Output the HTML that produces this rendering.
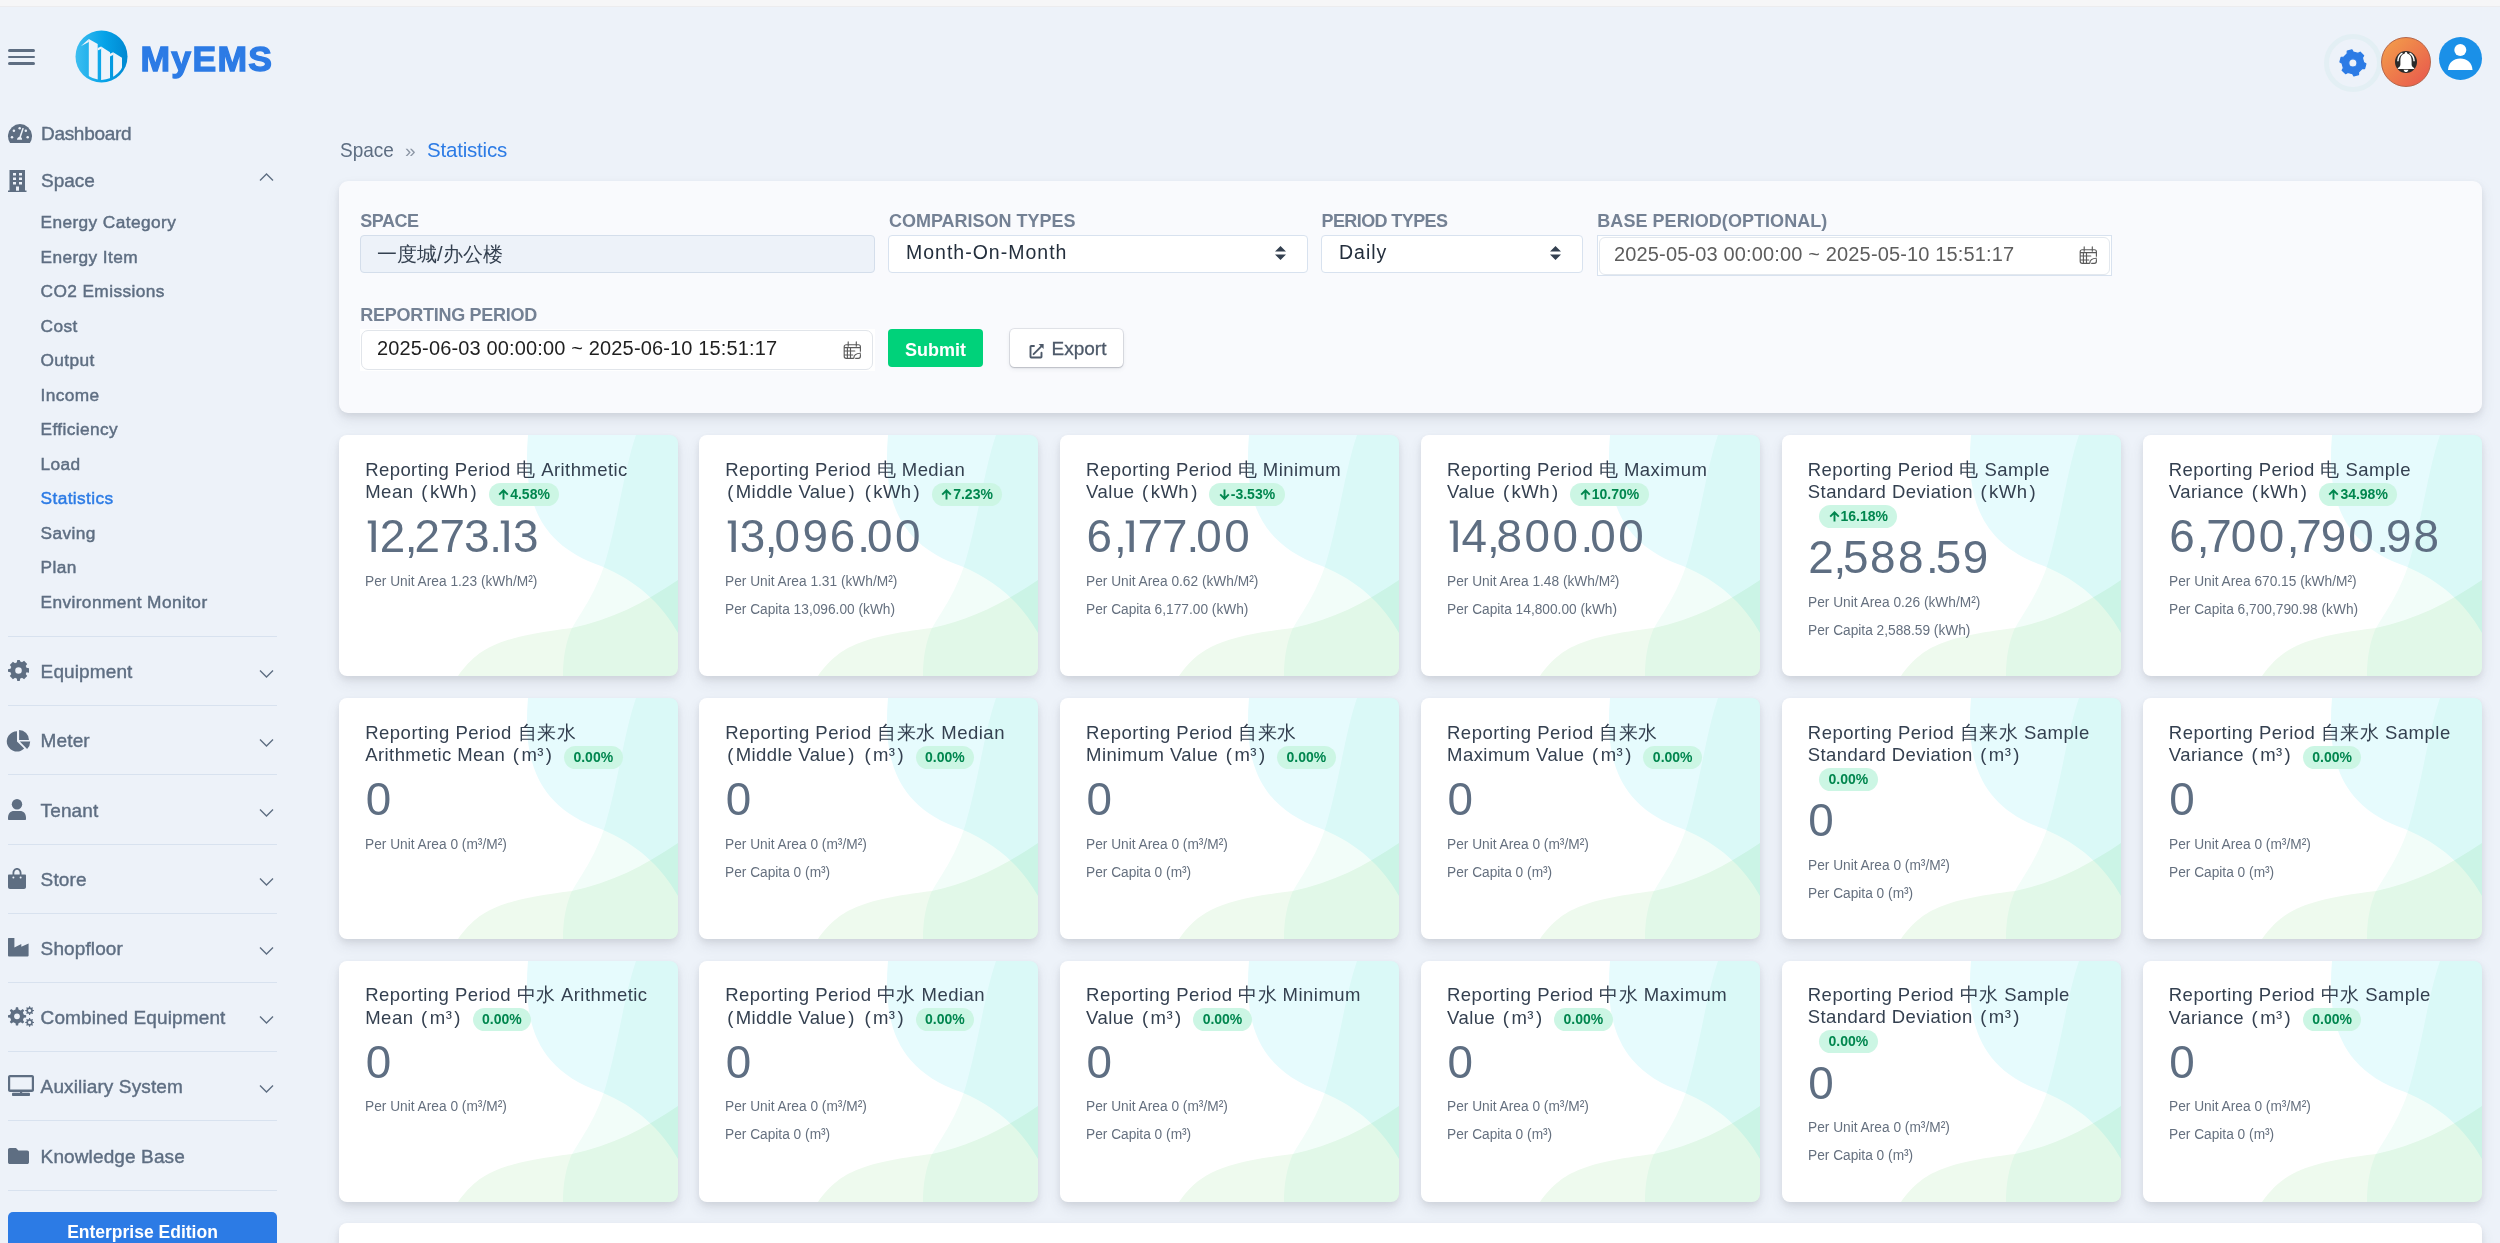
<!DOCTYPE html><html><head><meta charset='utf-8'><title>MyEMS</title><style>
*{box-sizing:border-box}
html,body{margin:0;padding:0}
body{width:2500px;height:1243px;overflow:hidden;background:#edf2f9;font-family:"Liberation Sans",sans-serif;position:relative}
.a{position:absolute;white-space:nowrap}
.topband{position:absolute;left:0;top:0;width:2500px;height:7px;background:#f6f6f7;border-bottom:1px solid #ececee}
.dv{position:absolute;left:8px;width:269px;height:1px;background:#d8e2ef}
.formcard{position:absolute;left:339px;top:181px;width:2143px;height:232px;background:#f9fafd;border-radius:9px;box-shadow:0 7px 14px 0 rgba(65,69,88,.1),0 3px 6px 0 rgba(0,0,0,.07)}
.inp{position:absolute;border:1px solid #d8e2ef;border-radius:5px;background:#fff}
.card{position:absolute;width:339px;height:241px;background:#fff;border-radius:8px;overflow:hidden;box-shadow:0 7px 14px 0 rgba(65,69,88,.1),0 3px 6px 0 rgba(0,0,0,.07)}
.card svg.bg{position:absolute;left:0;top:0}
.badge{position:absolute;height:23px;border-radius:12px;background:#ccf6e4;color:#00864e;font-weight:bold;font-size:15px;line-height:23px;text-align:center;white-space:nowrap}
.one{display:inline-block;vertical-align:0}
.pr{padding:0 2px}
.bdg{display:inline-block;margin:-12px 0 -12px 9.5px;padding:0 9.5px;height:23px;line-height:23px;border-radius:12px;background:#ccf6e4;color:#00864e;font-weight:bold;font-size:14px;letter-spacing:0;vertical-align:-0.5px}
</style></head><body>
<div class="topband"></div>
<div class="a" style="left:8px;top:49.2px;width:27px;height:2.6px;border-radius:2px;background:#5e6e82"></div>
<div class="a" style="left:8px;top:55.7px;width:27px;height:2.6px;border-radius:2px;background:#5e6e82"></div>
<div class="a" style="left:8px;top:62.2px;width:27px;height:2.6px;border-radius:2px;background:#5e6e82"></div>
<svg class="a" style="left:70px;top:25px" width="65" height="65" viewBox="0 0 65 65">
<defs><linearGradient id="lg" x1="0" y1="0" x2="1" y2="0"><stop offset="0" stop-color="#3dbef0"/><stop offset="0.55" stop-color="#06a3e8"/><stop offset="1" stop-color="#0088d1"/></linearGradient>
<clipPath id="lc"><circle cx="31.5" cy="31.5" r="23.4"/></clipPath></defs>
<circle cx="31.5" cy="31.5" r="26" fill="url(#lg)"/>
<g clip-path="url(#lc)" fill="#eef3fa">
<path d="M18.8,14 L27.7,19 L27.7,60 L18.8,60 Z"/><path d="M11,21 L18.8,13.9 L18.8,17 L12.6,20.3 Z"/>
<path d="M31.1,21.4 L40,27.2 L40,60 L31.1,60 Z"/><path d="M27.7,23 L31.1,21.4 L31.1,24 L27.7,25.6 Z"/>
<path d="M43.1,27.2 L52,32.7 L52,60 L43.1,60 Z"/><path d="M40,28.8 L43.1,27.2 L43.1,30 L40,31.4 Z"/>
</g></svg>
<div class="a" style="left:140.5px;top:41.7px;font-size:35.5px;line-height:35.5px;color:#2c7be5;font-weight:bold;letter-spacing:1.3px;-webkit-text-stroke:1.3px #2c7be5;">MyEMS</div>
<svg class="a" style="left:4px;top:119px" width="30" height="30" viewBox="0 0 30 30"><path fill="#5e6e82" d="M6.1,23.9 A12,12 0 1 1 25.9,23.9 Z"/><g fill="#edf2f9"><circle cx="9.9" cy="11.8" r="1.25"/><circle cx="15.7" cy="9.2" r="1.25"/><circle cx="21.8" cy="11.8" r="1.25"/><circle cx="8" cy="18.3" r="1.25"/><circle cx="23.7" cy="18.3" r="1.25"/><path d="M18.4,8.9 L19.9,9.2 L16.9,18.3 C17.6,18.6 18.1,19.3 18.1,20.8 L13,20.8 C13,19.4 13.9,18.3 15.3,18.1 Z"/></g></svg><svg class="a" style="left:8px;top:170px" width="19" height="22" viewBox="0 0 19 22"><path fill="#5e6e82" d="M1.5,0 L17,0 L17,20.5 L18.5,20.5 L18.5,22 L0,22 L0,20.5 L1.5,20.5 Z"/><g fill="#edf2f9"><rect x="5" y="3" width="3" height="2.5"/><rect x="11" y="3" width="3" height="2.5"/><rect x="5" y="7.5" width="3" height="2.5"/><rect x="11" y="7.5" width="3" height="2.5"/><rect x="5" y="12" width="3" height="2.5"/><rect x="11" y="12" width="3" height="2.5"/><rect x="8" y="16.5" width="3" height="4.2"/></g></svg><div class="a" style="left:41.0px;top:123.9px;font-size:19px;line-height:19px;color:#5e6e82;font-weight:normal;letter-spacing:-0.306px;-webkit-text-stroke:0.4px #5e6e82;">Dashboard</div>
<div class="a" style="left:41.0px;top:170.5px;font-size:19px;line-height:19px;color:#5e6e82;font-weight:normal;-webkit-text-stroke:0.4px #5e6e82;">Space</div>
<svg class="a" style="left:259px;top:172px" width="15" height="10" viewBox="0 0 15 10"><path d="M1,8.5 L7.5,2 L14,8.5" fill="none" stroke="#5e6e82" stroke-width="1.4"/></svg>
<div class="a" style="left:40.5px;top:214.4px;font-size:17.3px;line-height:17.3px;color:#5e6e82;font-weight:normal;letter-spacing:0.4px;-webkit-text-stroke:0.45px #5e6e82;">Energy Category</div>
<div class="a" style="left:40.5px;top:248.9px;font-size:17.3px;line-height:17.3px;color:#5e6e82;font-weight:normal;letter-spacing:0.4px;-webkit-text-stroke:0.45px #5e6e82;">Energy Item</div>
<div class="a" style="left:40.5px;top:283.4px;font-size:17.3px;line-height:17.3px;color:#5e6e82;font-weight:normal;letter-spacing:0.4px;-webkit-text-stroke:0.45px #5e6e82;">CO2 Emissions</div>
<div class="a" style="left:40.5px;top:317.9px;font-size:17.3px;line-height:17.3px;color:#5e6e82;font-weight:normal;letter-spacing:0.4px;-webkit-text-stroke:0.45px #5e6e82;">Cost</div>
<div class="a" style="left:40.5px;top:352.4px;font-size:17.3px;line-height:17.3px;color:#5e6e82;font-weight:normal;letter-spacing:0.4px;-webkit-text-stroke:0.45px #5e6e82;">Output</div>
<div class="a" style="left:40.5px;top:386.9px;font-size:17.3px;line-height:17.3px;color:#5e6e82;font-weight:normal;letter-spacing:0.4px;-webkit-text-stroke:0.45px #5e6e82;">Income</div>
<div class="a" style="left:40.5px;top:421.4px;font-size:17.3px;line-height:17.3px;color:#5e6e82;font-weight:normal;letter-spacing:0.4px;-webkit-text-stroke:0.45px #5e6e82;">Efficiency</div>
<div class="a" style="left:40.5px;top:455.9px;font-size:17.3px;line-height:17.3px;color:#5e6e82;font-weight:normal;letter-spacing:0.4px;-webkit-text-stroke:0.45px #5e6e82;">Load</div>
<div class="a" style="left:40.5px;top:490.4px;font-size:17.3px;line-height:17.3px;color:#2c7be5;font-weight:normal;letter-spacing:0.4px;-webkit-text-stroke:0.45px #2c7be5;">Statistics</div>
<div class="a" style="left:40.5px;top:524.9px;font-size:17.3px;line-height:17.3px;color:#5e6e82;font-weight:normal;letter-spacing:0.4px;-webkit-text-stroke:0.45px #5e6e82;">Saving</div>
<div class="a" style="left:40.5px;top:559.4px;font-size:17.3px;line-height:17.3px;color:#5e6e82;font-weight:normal;letter-spacing:0.4px;-webkit-text-stroke:0.45px #5e6e82;">Plan</div>
<div class="a" style="left:40.5px;top:593.9px;font-size:17.3px;line-height:17.3px;color:#5e6e82;font-weight:normal;letter-spacing:0.4px;-webkit-text-stroke:0.45px #5e6e82;">Environment Monitor</div>
<div class="dv" style="top:635.8px"></div>
<div class="dv" style="top:704.7px"></div>
<div class="dv" style="top:773.7px"></div>
<div class="dv" style="top:843.9px"></div>
<div class="dv" style="top:913.0px"></div>
<div class="dv" style="top:981.7px"></div>
<div class="dv" style="top:1051.0px"></div>
<div class="dv" style="top:1120.0px"></div>
<div class="dv" style="top:1190.0px"></div>
<div class="a" style="left:40.6px;top:661.8px;font-size:19px;line-height:19px;color:#5e6e82;font-weight:normal;letter-spacing:0.12px;-webkit-text-stroke:0.4px #5e6e82;">Equipment</div>
<svg class="a" style="left:259px;top:668.9px" width="15" height="10" viewBox="0 0 15 10"><path d="M1,1.5 L7.5,8 L14,1.5" fill="none" stroke="#5e6e82" stroke-width="1.4"/></svg>
<div class="a" style="left:40.6px;top:730.6px;font-size:19px;line-height:19px;color:#5e6e82;font-weight:normal;letter-spacing:0.12px;-webkit-text-stroke:0.4px #5e6e82;">Meter</div>
<svg class="a" style="left:259px;top:737.7px" width="15" height="10" viewBox="0 0 15 10"><path d="M1,1.5 L7.5,8 L14,1.5" fill="none" stroke="#5e6e82" stroke-width="1.4"/></svg>
<div class="a" style="left:40.6px;top:801.3px;font-size:19px;line-height:19px;color:#5e6e82;font-weight:normal;letter-spacing:0.12px;-webkit-text-stroke:0.4px #5e6e82;">Tenant</div>
<svg class="a" style="left:259px;top:808.4px" width="15" height="10" viewBox="0 0 15 10"><path d="M1,1.5 L7.5,8 L14,1.5" fill="none" stroke="#5e6e82" stroke-width="1.4"/></svg>
<div class="a" style="left:40.6px;top:870.1px;font-size:19px;line-height:19px;color:#5e6e82;font-weight:normal;letter-spacing:0.12px;-webkit-text-stroke:0.4px #5e6e82;">Store</div>
<svg class="a" style="left:259px;top:877.2px" width="15" height="10" viewBox="0 0 15 10"><path d="M1,1.5 L7.5,8 L14,1.5" fill="none" stroke="#5e6e82" stroke-width="1.4"/></svg>
<div class="a" style="left:40.6px;top:938.9px;font-size:19px;line-height:19px;color:#5e6e82;font-weight:normal;letter-spacing:0.12px;-webkit-text-stroke:0.4px #5e6e82;">Shopfloor</div>
<svg class="a" style="left:259px;top:946.0px" width="15" height="10" viewBox="0 0 15 10"><path d="M1,1.5 L7.5,8 L14,1.5" fill="none" stroke="#5e6e82" stroke-width="1.4"/></svg>
<div class="a" style="left:40.6px;top:1007.9px;font-size:19px;line-height:19px;color:#5e6e82;font-weight:normal;letter-spacing:0.12px;-webkit-text-stroke:0.4px #5e6e82;">Combined Equipment</div>
<svg class="a" style="left:259px;top:1015.0px" width="15" height="10" viewBox="0 0 15 10"><path d="M1,1.5 L7.5,8 L14,1.5" fill="none" stroke="#5e6e82" stroke-width="1.4"/></svg>
<div class="a" style="left:40.6px;top:1076.9px;font-size:19px;line-height:19px;color:#5e6e82;font-weight:normal;letter-spacing:0.12px;-webkit-text-stroke:0.4px #5e6e82;">Auxiliary System</div>
<svg class="a" style="left:259px;top:1084.0px" width="15" height="10" viewBox="0 0 15 10"><path d="M1,1.5 L7.5,8 L14,1.5" fill="none" stroke="#5e6e82" stroke-width="1.4"/></svg>
<div class="a" style="left:40.6px;top:1146.9px;font-size:19px;line-height:19px;color:#5e6e82;font-weight:normal;letter-spacing:0.12px;-webkit-text-stroke:0.4px #5e6e82;">Knowledge Base</div>
<svg class="a" style="left:8px;top:660px" width="21" height="21" viewBox="0 0 512 512"><path fill="#5e6e82" d="M512 310V202l-62-12c-4-15-10-29-18-42l36-52-76-76-52 36c-13-8-27-14-42-18L286 0H226l-12 62c-15 4-29 10-42 18L120 44 44 120l36 52c-8 13-14 27-18 42L0 226v60l62 12c4 15 10 29 18 42l-36 52 76 76 52-36c13 8 27 14 42 18l12 62h60l12-62c15-4 29-10 42-18l52 36 76-76-36-52c8-13 14-27 18-42zM256 336a80 80 0 1 1 0-160 80 80 0 0 1 0 160z"/></svg>
<svg class="a" style="left:4px;top:726px" width="30" height="30" viewBox="0 0 30 30"><path fill="#5e6e82" d="M13,15.4 L13,5.2 A10.2,10.2 0 1 0 20.2,22.6 Z M15.1,13.9 L15.1,4 A9.9,9.9 0 0 1 25,13.9 Z M15.8,15.6 L26.2,15.6 A10.4,10.4 0 0 1 23.1,23 Z"/></svg>
<svg class="a" style="left:8px;top:799px" width="18" height="21" viewBox="0 0 18 21"><circle cx="9" cy="5.2" r="5.2" fill="#5e6e82"/><path fill="#5e6e82" d="M0,19 C0,14.5 2.5,12 6,12 L12,12 C15.5,12 18,14.5 18,19 L18,20 C18,20.6 17.6,21 17,21 L1,21 C0.4,21 0,20.6 0,20 Z"/></svg>
<svg class="a" style="left:8px;top:868px" width="18" height="21" viewBox="0 0 18 21"><path fill="#5e6e82" d="M4.5,6.5 L4.5,5 C4.5,2.2 6.5,0 9,0 C11.5,0 13.5,2.2 13.5,5 L13.5,6.5 L17,6.5 C17.6,6.5 18,7 18,7.6 L18,19 C18,20.2 17.2,21 16,21 L2,21 C0.8,21 0,20.2 0,19 L0,7.6 C0,7 0.4,6.5 1,6.5 Z M6.3,6.5 L11.7,6.5 L11.7,5 C11.7,3.3 10.5,1.8 9,1.8 C7.5,1.8 6.3,3.3 6.3,5 Z"/><circle cx="5.4" cy="9.5" r="1" fill="#edf2f9"/><circle cx="12.6" cy="9.5" r="1" fill="#edf2f9"/></svg>
<svg class="a" style="left:8px;top:938px" width="21" height="19" viewBox="0 0 21 19"><path fill="#5e6e82" d="M0.6,0 L6.4,0 L6.4,9.6 L13.3,6 L13.3,8.8 L20.6,5.6 L20.6,17.6 C20.6,18.1 20.2,18.5 19.7,18.5 L0.9,18.5 C0.4,18.5 0,18.1 0,17.6 L0,0.6 C0,0.3 0.3,0 0.6,0 Z"/></svg>
<svg class="a" style="left:8px;top:1006px" width="27" height="22" viewBox="0 0 27 22"><path fill="#5e6e82" fill-rule="evenodd" d="M7.50,3.46 L7.92,1.16 L10.08,1.16 L10.50,3.46 L12.77,4.40 L14.70,3.08 L16.22,4.60 L14.90,6.53 L15.84,8.80 L18.14,9.22 L18.14,11.38 L15.84,11.80 L14.90,14.07 L16.22,16.00 L14.70,17.52 L12.77,16.20 L10.50,17.14 L10.08,19.44 L7.92,19.44 L7.50,17.14 L5.23,16.20 L3.30,17.52 L1.78,16.00 L3.10,14.07 L2.16,11.80 L-0.14,11.38 L-0.14,9.22 L2.16,8.80 L3.10,6.53 L1.78,4.60 L3.30,3.08 L5.23,4.40 Z M11.90,10.30 A2.9,2.9 0 1 0 6.10,10.30 A2.9,2.9 0 1 0 11.90,10.30 Z"/><path fill="#5e6e82" fill-rule="evenodd" d="M24.82,3.89 L25.97,4.08 L25.97,5.12 L24.82,5.31 L24.38,6.38 L25.06,7.32 L24.32,8.06 L23.38,7.38 L22.31,7.82 L22.12,8.97 L21.08,8.97 L20.89,7.82 L19.82,7.38 L18.88,8.06 L18.14,7.32 L18.82,6.38 L18.38,5.31 L17.23,5.12 L17.23,4.08 L18.38,3.89 L18.82,2.82 L18.14,1.88 L18.88,1.14 L19.82,1.82 L20.89,1.38 L21.08,0.23 L22.12,0.23 L22.31,1.38 L23.38,1.82 L24.32,1.14 L25.06,1.88 L24.38,2.82 Z M23.20,4.60 A1.6,1.6 0 1 0 20.00,4.60 A1.6,1.6 0 1 0 23.20,4.60 Z"/><path fill="#5e6e82" fill-rule="evenodd" d="M24.82,15.69 L25.97,15.88 L25.97,16.92 L24.82,17.11 L24.38,18.18 L25.06,19.12 L24.32,19.86 L23.38,19.18 L22.31,19.62 L22.12,20.77 L21.08,20.77 L20.89,19.62 L19.82,19.18 L18.88,19.86 L18.14,19.12 L18.82,18.18 L18.38,17.11 L17.23,16.92 L17.23,15.88 L18.38,15.69 L18.82,14.62 L18.14,13.68 L18.88,12.94 L19.82,13.62 L20.89,13.18 L21.08,12.03 L22.12,12.03 L22.31,13.18 L23.38,13.62 L24.32,12.94 L25.06,13.68 L24.38,14.62 Z M23.20,16.40 A1.6,1.6 0 1 0 20.00,16.40 A1.6,1.6 0 1 0 23.20,16.40 Z"/></svg>
<svg class="a" style="left:8px;top:1075px" width="26" height="21" viewBox="0 0 26 21"><path fill="#5e6e82" fill-rule="evenodd" d="M2,0 L24,0 C25.1,0 26,0.9 26,2 L26,15 C26,16.1 25.1,17 24,17 L2,17 C0.9,17 0,16.1 0,15 L0,2 C0,0.9 0.9,0 2,0 Z M2.2,2.2 L2.2,14.6 L23.8,14.6 L23.8,2.2 Z"/><rect x="12" y="16" width="2.2" height="2.5" fill="#5e6e82"/><rect x="4" y="17.8" width="18" height="3.2" rx="0.8" fill="#5e6e82"/></svg>
<svg class="a" style="left:8px;top:1148px" width="21" height="16" viewBox="0 0 21 16"><path fill="#5e6e82" d="M1.8,0 L8,0 L10.4,2.6 L19.2,2.6 C20.2,2.6 21,3.4 21,4.4 L21,14.2 C21,15.2 20.2,16 19.2,16 L1.8,16 C0.8,16 0,15.2 0,14.2 L0,1.8 C0,0.8 0.8,0 1.8,0 Z"/></svg>
<div class="a" style="left:8px;top:1212px;width:269px;height:40px;border-radius:5px;background:#2c7be5"></div>
<div class="a" style="left:8.0px;top:1224.4px;font-size:17.5px;line-height:17.5px;color:#fff;font-weight:bold;width:269px;text-align:center;">Enterprise Edition</div>
<div class="a" style="left:2324px;top:34px;width:58px;height:58px;border-radius:50%;border:5px solid #e3eff4"></div>
<svg class="a" style="left:2330px;top:40px" width="46" height="46" viewBox="0 0 46 46"><path fill="#2c7be5" fill-rule="evenodd" stroke="#2c7be5" stroke-width="1.2" stroke-linejoin="round" d="M17.21,13.72 L17.24,11.20 L21.95,9.93 L23.24,12.11 L28.00,13.38 L30.21,12.15 L33.65,15.59 L32.42,17.80 L33.69,22.56 L35.87,23.85 L34.60,28.56 L32.08,28.59 L28.59,32.08 L28.56,34.60 L23.85,35.87 L22.56,33.69 L17.80,32.42 L15.59,33.65 L12.15,30.21 L13.38,28.00 L12.11,23.24 L9.93,21.95 L11.20,17.24 L13.72,17.21 Z M27.00,22.90 A4.1,4.1 0 1 0 18.80,22.90 A4.1,4.1 0 1 0 27.00,22.90 Z"/></svg>
<div class="a" style="left:2381px;top:37px;width:50px;height:50px;border-radius:50%;background:linear-gradient(135deg,#f3a14a,#e8554d);border:1px solid #b5654a"></div>
<svg class="a" style="left:2395px;top:51px" width="22" height="22" viewBox="0 0 22 22"><circle cx="11" cy="11" r="11" fill="#2b2b2b"/><path fill="#fff" d="M11,0.9 C11.8,0.9 12.2,1.5 12.2,2.4 C15.5,3.2 16.6,6 16.6,9.5 L16.6,13.6 C16.6,15.3 18,16.4 19.2,17.1 L19.2,18 L2.8,18 L2.8,17.1 C4,16.4 5.4,15.3 5.4,13.6 L5.4,9.5 C5.4,6 6.5,3.2 9.8,2.4 C9.8,1.5 10.2,0.9 11,0.9 Z M8.6,18.7 L13.4,18.7 C13,20.2 12.1,21 11,21 C9.9,21 9,20.2 8.6,18.7 Z"/><path d="M2.9,10.2 C2.9,6.6 4.6,3.7 7.4,2.1 M19.1,10.2 C19.1,6.6 17.4,3.7 14.6,2.1" stroke="#fff" stroke-width="1.5" fill="none"/></svg>
<div class="a" style="left:2439px;top:37px;width:43px;height:43px;border-radius:50%;background:#1a90e8"></div>
<svg class="a" style="left:2439px;top:37px" width="43" height="43" viewBox="0 0 43 43"><circle cx="21.3" cy="13" r="6" fill="#fff"/><path fill="#fff" d="M9,33 C9.5,25.5 14.5,21.5 21.3,21.5 C28,21.5 33,25.5 33.5,33 Z"/></svg>
<div class="a" style="left:339.5px;top:139.4px;font-size:21px;line-height:21px;color:#5e6e82;font-weight:normal;transform:scaleX(0.905);transform-origin:0 0;">Space</div>
<div class="a" style="left:405.0px;top:141.1px;font-size:19px;line-height:19px;color:#8d97a5;font-weight:normal;">»</div>
<div class="a" style="left:427.0px;top:139.8px;font-size:20.5px;line-height:20.5px;color:#2c7be5;font-weight:normal;letter-spacing:-0.202px;">Statistics</div>
<div class="formcard"></div>
<div class="a" style="left:360.3px;top:212.2px;font-size:18px;line-height:18px;color:#748194;font-weight:bold;letter-spacing:-0.504px;">SPACE</div>
<div class="a" style="left:888.9px;top:212.2px;font-size:18px;line-height:18px;color:#748194;font-weight:bold;letter-spacing:-0.002px;">COMPARISON TYPES</div>
<div class="a" style="left:1321.5px;top:212.2px;font-size:18px;line-height:18px;color:#748194;font-weight:bold;letter-spacing:-0.594px;">PERIOD TYPES</div>
<div class="a" style="left:1597.3px;top:212.2px;font-size:18px;line-height:18px;color:#748194;font-weight:bold;letter-spacing:0.05px;">BASE PERIOD(OPTIONAL)</div>
<div class="a" style="left:360.3px;top:306.3px;font-size:18px;line-height:18px;color:#748194;font-weight:bold;letter-spacing:-0.268px;">REPORTING PERIOD</div>
<div class="inp" style="left:360px;top:235px;width:515px;height:38px;background:#edf2f9;border-color:#d4deeb;border-radius:4px"></div>
<div class="a" style="left:377.0px;top:244.1px;font-size:20px;line-height:20px;color:#344050;font-weight:normal;">一度城/办公楼</div>
<div class="inp" style="left:888px;top:235px;width:420px;height:38px;border-radius:4px"></div>
<div class="a" style="left:906.0px;top:243.2px;font-size:19.5px;line-height:19.5px;color:#232e3c;font-weight:normal;letter-spacing:1.0px;">Month-On-Month</div>
<svg class="a" style="left:1275px;top:246px" width="11" height="14" viewBox="0 0 11 14"><path fill="#344050" d="M5.5,0 L11,5.5 L0,5.5 Z M0,8.5 L11,8.5 L5.5,14 Z"/></svg>
<div class="inp" style="left:1321px;top:235px;width:262px;height:38px;border-radius:4px"></div>
<div class="a" style="left:1339.0px;top:243.2px;font-size:19.5px;line-height:19.5px;color:#232e3c;font-weight:normal;letter-spacing:1.0px;">Daily</div>
<svg class="a" style="left:1550px;top:246px" width="11" height="14" viewBox="0 0 11 14"><path fill="#344050" d="M5.5,0 L11,5.5 L0,5.5 Z M0,8.5 L11,8.5 L5.5,14 Z"/></svg>
<div class="a" style="left:1597px;top:235px;width:515px;height:41px;border:1px solid #d8e2ef;background:#fff"></div>
<div class="inp" style="left:1599px;top:236.5px;width:511px;height:38.5px;border-radius:6px;border-color:#e3e8ee"></div>
<div class="a" style="left:1614.0px;top:244.1px;font-size:20px;line-height:20px;color:#5d5d5d;font-weight:normal;letter-spacing:0.15px;">2025-05-03 00:00:00 ~ 2025-05-10 15:51:17</div>
<svg class="a" style="left:2079px;top:246px" width="18" height="18" viewBox="0 0 18 18"><path d="M17.4,10.2 L17.4,5.7 C17.4,4.6 16.5,3.7 15.4,3.7 L3.2,3.7 C2.1,3.7 1.2,4.6 1.2,5.7 L1.2,15.3 C1.2,16.4 2.1,17.3 3.2,17.3 L10.3,17.3 M17.4,13.6 L17.4,15.3 C17.4,16.4 16.5,17.3 15.4,17.3 L12.6,17.3 M1.2,6.6 L17.4,6.6 M5.2,0.9 L5.2,5.2 M13.3,0.9 L13.3,5.2 M1.2,10 L11.8,10 M1.2,14 L9.8,14 M4.4,7 L4.4,17 M7.5,7 L7.5,17 M10.8,17.2 C10.8,14.6 11.8,12.4 17.4,12.2" fill="none" stroke="#5a5a5a" stroke-width="1.15" stroke-linecap="round"/></svg>
<div class="a" style="left:360px;top:329px;width:515px;height:42px;background:#fff"></div>
<div class="inp" style="left:361px;top:330px;width:512px;height:39.5px;border-radius:7px;border-color:#e1e5ea"></div>
<div class="a" style="left:377.0px;top:338.4px;font-size:20px;line-height:20px;color:#1f1f1f;font-weight:normal;letter-spacing:0.15px;">2025-06-03 00:00:00 ~ 2025-06-10 15:51:17</div>
<svg class="a" style="left:843px;top:341px" width="18" height="18" viewBox="0 0 18 18"><path d="M17.4,10.2 L17.4,5.7 C17.4,4.6 16.5,3.7 15.4,3.7 L3.2,3.7 C2.1,3.7 1.2,4.6 1.2,5.7 L1.2,15.3 C1.2,16.4 2.1,17.3 3.2,17.3 L10.3,17.3 M17.4,13.6 L17.4,15.3 C17.4,16.4 16.5,17.3 15.4,17.3 L12.6,17.3 M1.2,6.6 L17.4,6.6 M5.2,0.9 L5.2,5.2 M13.3,0.9 L13.3,5.2 M1.2,10 L11.8,10 M1.2,14 L9.8,14 M4.4,7 L4.4,17 M7.5,7 L7.5,17 M10.8,17.2 C10.8,14.6 11.8,12.4 17.4,12.2" fill="none" stroke="#5a5a5a" stroke-width="1.15" stroke-linecap="round"/></svg>
<div class="a" style="left:888px;top:329px;width:95px;height:37.5px;border-radius:4px;background:#00d27a"></div>
<div class="a" style="left:888.0px;top:340.5px;font-size:18px;line-height:18px;color:#fff;font-weight:bold;width:95px;text-align:center;">Submit</div>
<div class="a" style="left:1009.5px;top:328.5px;width:113.5px;height:38.5px;border-radius:4.5px;background:#fff;box-shadow:0 0 0 1px rgba(43,45,80,.1),0 2px 5px 0 rgba(43,45,80,.08),0 1px 1.5px 0 rgba(0,0,0,.07),0 1px 2px 0 rgba(0,0,0,.08)"></div>
<svg class="a" style="left:1028.5px;top:342.5px" width="16" height="16" viewBox="0 0 16 16"><path d="M5,3 L2.2,3 C1.8,3 1.5,3.3 1.5,3.7 L1.5,13.8 C1.5,14.2 1.8,14.5 2.2,14.5 L11.8,14.5 C12.2,14.5 12.5,14.2 12.5,13.8 L12.5,9.8 M4.6,11.2 L12.6,3.2" fill="none" stroke="#4d5969" stroke-width="1.9" stroke-linecap="round"/><path d="M9.6,1 L14.6,1 L14.6,6 Z" fill="#4d5969"/></svg>
<div class="a" style="left:1051.5px;top:339.0px;font-size:19px;line-height:19px;color:#4d5969;font-weight:normal;-webkit-text-stroke:0.3px #4d5969;">Export</div>
<div class="card" style="left:339.2px;top:435px"><svg class="bg" width="339" height="241" viewBox="0 0 339 241">
<path style="mix-blend-mode:multiply" fill="#e6fbfd" d="M189,0 C184,58 195,108 262,131 C298,146 322,168 339,198 L339,0 Z"/>
<path style="mix-blend-mode:multiply" fill="#f2fdf9" d="M297,0 C285,35 280,80 266,128 C256,160 240,180 232,195 C226,210 224,225 224,241 L339,241 L339,0 Z"/>
<path style="mix-blend-mode:multiply" fill="#eefaee" d="M119,241 C140,212 160,202 233,193 C272,185 305,168 339,145 L339,241 Z"/>
</svg></div>
<div class="a" style="left:365.2px;top:460.6px;font-size:18.5px;line-height:18.5px;color:#344050;font-weight:normal;letter-spacing:0.418px;">Reporting Period 电 Arithmetic</div>
<div class="a" style="left:365.2px;top:483.3px;font-size:18.5px;line-height:18.5px;color:#344050;font-weight:normal;letter-spacing:0.525px;">Mean <span class="pr">(</span>kWh<span class="pr">)</span><span class="bdg"><svg width="11" height="11" viewBox="0 0 11 11" style="vertical-align:-1px;margin-right:1px"><path d="M5.5,10.5 L5.5,1.5 M1.2,5.6 L5.5,1.3 L9.8,5.6" fill="none" stroke="#00864e" stroke-width="1.9"/></svg>4.58%</span></div>
<div class="a" style="left:365.7px;top:514.4px;font-size:45.8px;line-height:45.8px;color:#5e6e82;font-weight:normal;"><svg class="one" width="14" height="32" viewBox="0 0 14 32"><path fill="#5e6e82" d="M1.8,0.4 L9.8,0.4 L9.8,32 L5.5,32 L5.5,3.6 L1.8,3.6 Z"/></svg><span style="letter-spacing:-0.3px">2</span><span style="letter-spacing:-3.2px">,</span><span style="letter-spacing:-0.3px">2</span><span style="letter-spacing:-1.0px">7</span><span style="letter-spacing:-0.3px">3</span><span style="letter-spacing:-3.0px">.</span><svg class="one" width="14" height="32" viewBox="0 0 14 32"><path fill="#5e6e82" d="M1.8,0.4 L9.8,0.4 L9.8,32 L5.5,32 L5.5,3.6 L1.8,3.6 Z"/></svg><span style="letter-spacing:-0.3px">3</span></div>
<div class="a" style="left:365.2px;top:572.9px;font-size:15.5px;line-height:15.5px;color:#65707f;font-weight:normal;transform:scaleX(0.885);transform-origin:0 0;">Per Unit Area 1.23 (kWh/M²)</div>
<div class="card" style="left:699.2px;top:435px"><svg class="bg" width="339" height="241" viewBox="0 0 339 241">
<path style="mix-blend-mode:multiply" fill="#e6fbfd" d="M189,0 C184,58 195,108 262,131 C298,146 322,168 339,198 L339,0 Z"/>
<path style="mix-blend-mode:multiply" fill="#f2fdf9" d="M297,0 C285,35 280,80 266,128 C256,160 240,180 232,195 C226,210 224,225 224,241 L339,241 L339,0 Z"/>
<path style="mix-blend-mode:multiply" fill="#eefaee" d="M119,241 C140,212 160,202 233,193 C272,185 305,168 339,145 L339,241 Z"/>
</svg></div>
<div class="a" style="left:725.2px;top:460.6px;font-size:18.5px;line-height:18.5px;color:#344050;font-weight:normal;letter-spacing:0.446px;">Reporting Period 电 Median</div>
<div class="a" style="left:725.2px;top:483.3px;font-size:18.5px;line-height:18.5px;color:#344050;font-weight:normal;letter-spacing:0.429px;"><span class="pr">(</span>Middle Value<span class="pr">)</span> <span class="pr">(</span>kWh<span class="pr">)</span><span class="bdg"><svg width="11" height="11" viewBox="0 0 11 11" style="vertical-align:-1px;margin-right:1px"><path d="M5.5,10.5 L5.5,1.5 M1.2,5.6 L5.5,1.3 L9.8,5.6" fill="none" stroke="#00864e" stroke-width="1.9"/></svg>7.23%</span></div>
<div class="a" style="left:725.7px;top:514.4px;font-size:45.8px;line-height:45.8px;color:#5e6e82;font-weight:normal;"><svg class="one" width="14" height="32" viewBox="0 0 14 32"><path fill="#5e6e82" d="M1.8,0.4 L9.8,0.4 L9.8,32 L5.5,32 L5.5,3.6 L1.8,3.6 Z"/></svg><span style="letter-spacing:-0.3px">3</span><span style="letter-spacing:-3.2px">,</span><span style="letter-spacing:2.5px">0</span><span style="letter-spacing:2.0px">9</span><span style="letter-spacing:2.0px">6</span><span style="letter-spacing:-3.0px">.</span><span style="letter-spacing:2.5px">0</span><span style="letter-spacing:2.5px">0</span></div>
<div class="a" style="left:725.2px;top:572.9px;font-size:15.5px;line-height:15.5px;color:#65707f;font-weight:normal;transform:scaleX(0.885);transform-origin:0 0;">Per Unit Area 1.31 (kWh/M²)</div>
<div class="a" style="left:725.2px;top:600.7px;font-size:15.5px;line-height:15.5px;color:#65707f;font-weight:normal;transform:scaleX(0.885);transform-origin:0 0;">Per Capita 13,096.00 (kWh)</div>
<div class="card" style="left:1060.1px;top:435px"><svg class="bg" width="339" height="241" viewBox="0 0 339 241">
<path style="mix-blend-mode:multiply" fill="#e6fbfd" d="M189,0 C184,58 195,108 262,131 C298,146 322,168 339,198 L339,0 Z"/>
<path style="mix-blend-mode:multiply" fill="#f2fdf9" d="M297,0 C285,35 280,80 266,128 C256,160 240,180 232,195 C226,210 224,225 224,241 L339,241 L339,0 Z"/>
<path style="mix-blend-mode:multiply" fill="#eefaee" d="M119,241 C140,212 160,202 233,193 C272,185 305,168 339,145 L339,241 Z"/>
</svg></div>
<div class="a" style="left:1086.1px;top:460.6px;font-size:18.5px;line-height:18.5px;color:#344050;font-weight:normal;letter-spacing:0.455px;">Reporting Period 电 Minimum</div>
<div class="a" style="left:1086.1px;top:483.3px;font-size:18.5px;line-height:18.5px;color:#344050;font-weight:normal;letter-spacing:0.477px;">Value <span class="pr">(</span>kWh<span class="pr">)</span><span class="bdg"><svg width="11" height="11" viewBox="0 0 11 11" style="vertical-align:-1px;margin-right:1px"><path d="M5.5,0.5 L5.5,9.5 M1.2,5.4 L5.5,9.7 L9.8,5.4" fill="none" stroke="#00864e" stroke-width="1.9"/></svg>-3.53%</span></div>
<div class="a" style="left:1086.6px;top:514.4px;font-size:45.8px;line-height:45.8px;color:#5e6e82;font-weight:normal;"><span style="letter-spacing:2.0px">6</span><span style="letter-spacing:-3.2px">,</span><svg class="one" width="14" height="32" viewBox="0 0 14 32"><path fill="#5e6e82" d="M1.8,0.4 L9.8,0.4 L9.8,32 L5.5,32 L5.5,3.6 L1.8,3.6 Z"/></svg><span style="letter-spacing:-1.0px">7</span><span style="letter-spacing:-1.0px">7</span><span style="letter-spacing:-3.0px">.</span><span style="letter-spacing:2.5px">0</span><span style="letter-spacing:2.5px">0</span></div>
<div class="a" style="left:1086.1px;top:572.9px;font-size:15.5px;line-height:15.5px;color:#65707f;font-weight:normal;transform:scaleX(0.885);transform-origin:0 0;">Per Unit Area 0.62 (kWh/M²)</div>
<div class="a" style="left:1086.1px;top:600.7px;font-size:15.5px;line-height:15.5px;color:#65707f;font-weight:normal;transform:scaleX(0.885);transform-origin:0 0;">Per Capita 6,177.00 (kWh)</div>
<div class="card" style="left:1421px;top:435px"><svg class="bg" width="339" height="241" viewBox="0 0 339 241">
<path style="mix-blend-mode:multiply" fill="#e6fbfd" d="M189,0 C184,58 195,108 262,131 C298,146 322,168 339,198 L339,0 Z"/>
<path style="mix-blend-mode:multiply" fill="#f2fdf9" d="M297,0 C285,35 280,80 266,128 C256,160 240,180 232,195 C226,210 224,225 224,241 L339,241 L339,0 Z"/>
<path style="mix-blend-mode:multiply" fill="#eefaee" d="M119,241 C140,212 160,202 233,193 C272,185 305,168 339,145 L339,241 Z"/>
</svg></div>
<div class="a" style="left:1447.0px;top:460.6px;font-size:18.5px;line-height:18.5px;color:#344050;font-weight:normal;letter-spacing:0.465px;">Reporting Period 电 Maximum</div>
<div class="a" style="left:1447.0px;top:483.3px;font-size:18.5px;line-height:18.5px;color:#344050;font-weight:normal;letter-spacing:0.477px;">Value <span class="pr">(</span>kWh<span class="pr">)</span><span class="bdg"><svg width="11" height="11" viewBox="0 0 11 11" style="vertical-align:-1px;margin-right:1px"><path d="M5.5,10.5 L5.5,1.5 M1.2,5.6 L5.5,1.3 L9.8,5.6" fill="none" stroke="#00864e" stroke-width="1.9"/></svg>10.70%</span></div>
<div class="a" style="left:1447.5px;top:514.4px;font-size:45.8px;line-height:45.8px;color:#5e6e82;font-weight:normal;"><svg class="one" width="14" height="32" viewBox="0 0 14 32"><path fill="#5e6e82" d="M1.8,0.4 L9.8,0.4 L9.8,32 L5.5,32 L5.5,3.6 L1.8,3.6 Z"/></svg>4<span style="letter-spacing:-3.2px">,</span><span style="letter-spacing:2.5px">8</span><span style="letter-spacing:2.5px">0</span><span style="letter-spacing:2.5px">0</span><span style="letter-spacing:-3.0px">.</span><span style="letter-spacing:2.5px">0</span><span style="letter-spacing:2.5px">0</span></div>
<div class="a" style="left:1447.0px;top:572.9px;font-size:15.5px;line-height:15.5px;color:#65707f;font-weight:normal;transform:scaleX(0.885);transform-origin:0 0;">Per Unit Area 1.48 (kWh/M²)</div>
<div class="a" style="left:1447.0px;top:600.7px;font-size:15.5px;line-height:15.5px;color:#65707f;font-weight:normal;transform:scaleX(0.885);transform-origin:0 0;">Per Capita 14,800.00 (kWh)</div>
<div class="card" style="left:1781.8px;top:435px"><svg class="bg" width="339" height="241" viewBox="0 0 339 241">
<path style="mix-blend-mode:multiply" fill="#e6fbfd" d="M189,0 C184,58 195,108 262,131 C298,146 322,168 339,198 L339,0 Z"/>
<path style="mix-blend-mode:multiply" fill="#f2fdf9" d="M297,0 C285,35 280,80 266,128 C256,160 240,180 232,195 C226,210 224,225 224,241 L339,241 L339,0 Z"/>
<path style="mix-blend-mode:multiply" fill="#eefaee" d="M119,241 C140,212 160,202 233,193 C272,185 305,168 339,145 L339,241 Z"/>
</svg></div>
<div class="a" style="left:1807.8px;top:460.6px;font-size:18.5px;line-height:18.5px;color:#344050;font-weight:normal;letter-spacing:0.45px;">Reporting Period 电 Sample</div>
<div class="a" style="left:1807.8px;top:482.9px;font-size:18.5px;line-height:18.5px;color:#344050;font-weight:normal;letter-spacing:0.432px;">Standard Deviation <span class="pr">(</span>kWh<span class="pr">)</span></div>
<div class="a" style="left:1809.5px;top:505.3px;font-size:18.5px;line-height:18.5px;color:#344050;font-weight:normal;"><span class="bdg"><svg width="11" height="11" viewBox="0 0 11 11" style="vertical-align:-1px;margin-right:1px"><path d="M5.5,10.5 L5.5,1.5 M1.2,5.6 L5.5,1.3 L9.8,5.6" fill="none" stroke="#00864e" stroke-width="1.9"/></svg>16.18%</span></div>
<div class="a" style="left:1808.3px;top:535.4px;font-size:45.8px;line-height:45.8px;color:#5e6e82;font-weight:normal;"><span style="letter-spacing:-0.3px">2</span><span style="letter-spacing:-3.2px">,</span><span style="letter-spacing:1.5px">5</span><span style="letter-spacing:2.5px">8</span><span style="letter-spacing:2.5px">8</span><span style="letter-spacing:-3.0px">.</span><span style="letter-spacing:1.5px">5</span><span style="letter-spacing:2.0px">9</span></div>
<div class="a" style="left:1807.8px;top:593.9px;font-size:15.5px;line-height:15.5px;color:#65707f;font-weight:normal;transform:scaleX(0.885);transform-origin:0 0;">Per Unit Area 0.26 (kWh/M²)</div>
<div class="a" style="left:1807.8px;top:621.7px;font-size:15.5px;line-height:15.5px;color:#65707f;font-weight:normal;transform:scaleX(0.885);transform-origin:0 0;">Per Capita 2,588.59 (kWh)</div>
<div class="card" style="left:2142.8px;top:435px"><svg class="bg" width="339" height="241" viewBox="0 0 339 241">
<path style="mix-blend-mode:multiply" fill="#e6fbfd" d="M189,0 C184,58 195,108 262,131 C298,146 322,168 339,198 L339,0 Z"/>
<path style="mix-blend-mode:multiply" fill="#f2fdf9" d="M297,0 C285,35 280,80 266,128 C256,160 240,180 232,195 C226,210 224,225 224,241 L339,241 L339,0 Z"/>
<path style="mix-blend-mode:multiply" fill="#eefaee" d="M119,241 C140,212 160,202 233,193 C272,185 305,168 339,145 L339,241 Z"/>
</svg></div>
<div class="a" style="left:2168.8px;top:460.6px;font-size:18.5px;line-height:18.5px;color:#344050;font-weight:normal;letter-spacing:0.45px;">Reporting Period 电 Sample</div>
<div class="a" style="left:2168.8px;top:483.3px;font-size:18.5px;line-height:18.5px;color:#344050;font-weight:normal;letter-spacing:0.46px;">Variance <span class="pr">(</span>kWh<span class="pr">)</span><span class="bdg"><svg width="11" height="11" viewBox="0 0 11 11" style="vertical-align:-1px;margin-right:1px"><path d="M5.5,10.5 L5.5,1.5 M1.2,5.6 L5.5,1.3 L9.8,5.6" fill="none" stroke="#00864e" stroke-width="1.9"/></svg>34.98%</span></div>
<div class="a" style="left:2169.3px;top:514.4px;font-size:45.8px;line-height:45.8px;color:#5e6e82;font-weight:normal;"><span style="letter-spacing:2.0px">6</span><span style="letter-spacing:-3.2px">,</span><span style="letter-spacing:-1.0px">7</span><span style="letter-spacing:2.5px">0</span><span style="letter-spacing:2.5px">0</span><span style="letter-spacing:-3.2px">,</span><span style="letter-spacing:-1.0px">7</span><span style="letter-spacing:2.0px">9</span><span style="letter-spacing:2.5px">0</span><span style="letter-spacing:-3.0px">.</span><span style="letter-spacing:2.0px">9</span><span style="letter-spacing:2.5px">8</span></div>
<div class="a" style="left:2168.8px;top:572.9px;font-size:15.5px;line-height:15.5px;color:#65707f;font-weight:normal;transform:scaleX(0.885);transform-origin:0 0;">Per Unit Area 670.15 (kWh/M²)</div>
<div class="a" style="left:2168.8px;top:600.7px;font-size:15.5px;line-height:15.5px;color:#65707f;font-weight:normal;transform:scaleX(0.885);transform-origin:0 0;">Per Capita 6,700,790.98 (kWh)</div>
<div class="card" style="left:339.2px;top:698px"><svg class="bg" width="339" height="241" viewBox="0 0 339 241">
<path style="mix-blend-mode:multiply" fill="#e6fbfd" d="M189,0 C184,58 195,108 262,131 C298,146 322,168 339,198 L339,0 Z"/>
<path style="mix-blend-mode:multiply" fill="#f2fdf9" d="M297,0 C285,35 280,80 266,128 C256,160 240,180 232,195 C226,210 224,225 224,241 L339,241 L339,0 Z"/>
<path style="mix-blend-mode:multiply" fill="#eefaee" d="M119,241 C140,212 160,202 233,193 C272,185 305,168 339,145 L339,241 Z"/>
</svg></div>
<div class="a" style="left:365.2px;top:723.6px;font-size:18.5px;line-height:18.5px;color:#344050;font-weight:normal;letter-spacing:0.492px;">Reporting Period 自来水</div>
<div class="a" style="left:365.2px;top:746.3px;font-size:18.5px;line-height:18.5px;color:#344050;font-weight:normal;letter-spacing:0.426px;">Arithmetic Mean <span class="pr">(</span>m³<span class="pr">)</span><span class="bdg">0.00%</span></div>
<div class="a" style="left:365.7px;top:777.4px;font-size:45.8px;line-height:45.8px;color:#5e6e82;font-weight:normal;"><span style="letter-spacing:2.5px">0</span></div>
<div class="a" style="left:365.2px;top:835.9px;font-size:15.5px;line-height:15.5px;color:#65707f;font-weight:normal;transform:scaleX(0.885);transform-origin:0 0;">Per Unit Area 0 (m³/M²)</div>
<div class="card" style="left:699.2px;top:698px"><svg class="bg" width="339" height="241" viewBox="0 0 339 241">
<path style="mix-blend-mode:multiply" fill="#e6fbfd" d="M189,0 C184,58 195,108 262,131 C298,146 322,168 339,198 L339,0 Z"/>
<path style="mix-blend-mode:multiply" fill="#f2fdf9" d="M297,0 C285,35 280,80 266,128 C256,160 240,180 232,195 C226,210 224,225 224,241 L339,241 L339,0 Z"/>
<path style="mix-blend-mode:multiply" fill="#eefaee" d="M119,241 C140,212 160,202 233,193 C272,185 305,168 339,145 L339,241 Z"/>
</svg></div>
<div class="a" style="left:725.2px;top:723.6px;font-size:18.5px;line-height:18.5px;color:#344050;font-weight:normal;letter-spacing:0.479px;">Reporting Period 自来水 Median</div>
<div class="a" style="left:725.2px;top:746.3px;font-size:18.5px;line-height:18.5px;color:#344050;font-weight:normal;letter-spacing:0.412px;"><span class="pr">(</span>Middle Value<span class="pr">)</span> <span class="pr">(</span>m³<span class="pr">)</span><span class="bdg">0.00%</span></div>
<div class="a" style="left:725.7px;top:777.4px;font-size:45.8px;line-height:45.8px;color:#5e6e82;font-weight:normal;"><span style="letter-spacing:2.5px">0</span></div>
<div class="a" style="left:725.2px;top:835.9px;font-size:15.5px;line-height:15.5px;color:#65707f;font-weight:normal;transform:scaleX(0.885);transform-origin:0 0;">Per Unit Area 0 (m³/M²)</div>
<div class="a" style="left:725.2px;top:863.7px;font-size:15.5px;line-height:15.5px;color:#65707f;font-weight:normal;transform:scaleX(0.885);transform-origin:0 0;">Per Capita 0 (m³)</div>
<div class="card" style="left:1060.1px;top:698px"><svg class="bg" width="339" height="241" viewBox="0 0 339 241">
<path style="mix-blend-mode:multiply" fill="#e6fbfd" d="M189,0 C184,58 195,108 262,131 C298,146 322,168 339,198 L339,0 Z"/>
<path style="mix-blend-mode:multiply" fill="#f2fdf9" d="M297,0 C285,35 280,80 266,128 C256,160 240,180 232,195 C226,210 224,225 224,241 L339,241 L339,0 Z"/>
<path style="mix-blend-mode:multiply" fill="#eefaee" d="M119,241 C140,212 160,202 233,193 C272,185 305,168 339,145 L339,241 Z"/>
</svg></div>
<div class="a" style="left:1086.1px;top:723.6px;font-size:18.5px;line-height:18.5px;color:#344050;font-weight:normal;letter-spacing:0.492px;">Reporting Period 自来水</div>
<div class="a" style="left:1086.1px;top:746.3px;font-size:18.5px;line-height:18.5px;color:#344050;font-weight:normal;letter-spacing:0.459px;">Minimum Value <span class="pr">(</span>m³<span class="pr">)</span><span class="bdg">0.00%</span></div>
<div class="a" style="left:1086.6px;top:777.4px;font-size:45.8px;line-height:45.8px;color:#5e6e82;font-weight:normal;"><span style="letter-spacing:2.5px">0</span></div>
<div class="a" style="left:1086.1px;top:835.9px;font-size:15.5px;line-height:15.5px;color:#65707f;font-weight:normal;transform:scaleX(0.885);transform-origin:0 0;">Per Unit Area 0 (m³/M²)</div>
<div class="a" style="left:1086.1px;top:863.7px;font-size:15.5px;line-height:15.5px;color:#65707f;font-weight:normal;transform:scaleX(0.885);transform-origin:0 0;">Per Capita 0 (m³)</div>
<div class="card" style="left:1421px;top:698px"><svg class="bg" width="339" height="241" viewBox="0 0 339 241">
<path style="mix-blend-mode:multiply" fill="#e6fbfd" d="M189,0 C184,58 195,108 262,131 C298,146 322,168 339,198 L339,0 Z"/>
<path style="mix-blend-mode:multiply" fill="#f2fdf9" d="M297,0 C285,35 280,80 266,128 C256,160 240,180 232,195 C226,210 224,225 224,241 L339,241 L339,0 Z"/>
<path style="mix-blend-mode:multiply" fill="#eefaee" d="M119,241 C140,212 160,202 233,193 C272,185 305,168 339,145 L339,241 Z"/>
</svg></div>
<div class="a" style="left:1447.0px;top:723.6px;font-size:18.5px;line-height:18.5px;color:#344050;font-weight:normal;letter-spacing:0.492px;">Reporting Period 自来水</div>
<div class="a" style="left:1447.0px;top:746.3px;font-size:18.5px;line-height:18.5px;color:#344050;font-weight:normal;letter-spacing:0.474px;">Maximum Value <span class="pr">(</span>m³<span class="pr">)</span><span class="bdg">0.00%</span></div>
<div class="a" style="left:1447.5px;top:777.4px;font-size:45.8px;line-height:45.8px;color:#5e6e82;font-weight:normal;"><span style="letter-spacing:2.5px">0</span></div>
<div class="a" style="left:1447.0px;top:835.9px;font-size:15.5px;line-height:15.5px;color:#65707f;font-weight:normal;transform:scaleX(0.885);transform-origin:0 0;">Per Unit Area 0 (m³/M²)</div>
<div class="a" style="left:1447.0px;top:863.7px;font-size:15.5px;line-height:15.5px;color:#65707f;font-weight:normal;transform:scaleX(0.885);transform-origin:0 0;">Per Capita 0 (m³)</div>
<div class="card" style="left:1781.8px;top:698px"><svg class="bg" width="339" height="241" viewBox="0 0 339 241">
<path style="mix-blend-mode:multiply" fill="#e6fbfd" d="M189,0 C184,58 195,108 262,131 C298,146 322,168 339,198 L339,0 Z"/>
<path style="mix-blend-mode:multiply" fill="#f2fdf9" d="M297,0 C285,35 280,80 266,128 C256,160 240,180 232,195 C226,210 224,225 224,241 L339,241 L339,0 Z"/>
<path style="mix-blend-mode:multiply" fill="#eefaee" d="M119,241 C140,212 160,202 233,193 C272,185 305,168 339,145 L339,241 Z"/>
</svg></div>
<div class="a" style="left:1807.8px;top:723.6px;font-size:18.5px;line-height:18.5px;color:#344050;font-weight:normal;letter-spacing:0.482px;">Reporting Period 自来水 Sample</div>
<div class="a" style="left:1807.8px;top:745.9px;font-size:18.5px;line-height:18.5px;color:#344050;font-weight:normal;letter-spacing:0.419px;">Standard Deviation <span class="pr">(</span>m³<span class="pr">)</span></div>
<div class="a" style="left:1809.5px;top:768.3px;font-size:18.5px;line-height:18.5px;color:#344050;font-weight:normal;"><span class="bdg">0.00%</span></div>
<div class="a" style="left:1808.3px;top:798.4px;font-size:45.8px;line-height:45.8px;color:#5e6e82;font-weight:normal;"><span style="letter-spacing:2.5px">0</span></div>
<div class="a" style="left:1807.8px;top:856.9px;font-size:15.5px;line-height:15.5px;color:#65707f;font-weight:normal;transform:scaleX(0.885);transform-origin:0 0;">Per Unit Area 0 (m³/M²)</div>
<div class="a" style="left:1807.8px;top:884.7px;font-size:15.5px;line-height:15.5px;color:#65707f;font-weight:normal;transform:scaleX(0.885);transform-origin:0 0;">Per Capita 0 (m³)</div>
<div class="card" style="left:2142.8px;top:698px"><svg class="bg" width="339" height="241" viewBox="0 0 339 241">
<path style="mix-blend-mode:multiply" fill="#e6fbfd" d="M189,0 C184,58 195,108 262,131 C298,146 322,168 339,198 L339,0 Z"/>
<path style="mix-blend-mode:multiply" fill="#f2fdf9" d="M297,0 C285,35 280,80 266,128 C256,160 240,180 232,195 C226,210 224,225 224,241 L339,241 L339,0 Z"/>
<path style="mix-blend-mode:multiply" fill="#eefaee" d="M119,241 C140,212 160,202 233,193 C272,185 305,168 339,145 L339,241 Z"/>
</svg></div>
<div class="a" style="left:2168.8px;top:723.6px;font-size:18.5px;line-height:18.5px;color:#344050;font-weight:normal;letter-spacing:0.482px;">Reporting Period 自来水 Sample</div>
<div class="a" style="left:2168.8px;top:746.3px;font-size:18.5px;line-height:18.5px;color:#344050;font-weight:normal;letter-spacing:0.438px;">Variance <span class="pr">(</span>m³<span class="pr">)</span><span class="bdg">0.00%</span></div>
<div class="a" style="left:2169.3px;top:777.4px;font-size:45.8px;line-height:45.8px;color:#5e6e82;font-weight:normal;"><span style="letter-spacing:2.5px">0</span></div>
<div class="a" style="left:2168.8px;top:835.9px;font-size:15.5px;line-height:15.5px;color:#65707f;font-weight:normal;transform:scaleX(0.885);transform-origin:0 0;">Per Unit Area 0 (m³/M²)</div>
<div class="a" style="left:2168.8px;top:863.7px;font-size:15.5px;line-height:15.5px;color:#65707f;font-weight:normal;transform:scaleX(0.885);transform-origin:0 0;">Per Capita 0 (m³)</div>
<div class="card" style="left:339.2px;top:960.5px"><svg class="bg" width="339" height="241" viewBox="0 0 339 241">
<path style="mix-blend-mode:multiply" fill="#e6fbfd" d="M189,0 C184,58 195,108 262,131 C298,146 322,168 339,198 L339,0 Z"/>
<path style="mix-blend-mode:multiply" fill="#f2fdf9" d="M297,0 C285,35 280,80 266,128 C256,160 240,180 232,195 C226,210 224,225 224,241 L339,241 L339,0 Z"/>
<path style="mix-blend-mode:multiply" fill="#eefaee" d="M119,241 C140,212 160,202 233,193 C272,185 305,168 339,145 L339,241 Z"/>
</svg></div>
<div class="a" style="left:365.2px;top:986.1px;font-size:18.5px;line-height:18.5px;color:#344050;font-weight:normal;letter-spacing:0.434px;">Reporting Period 中水 Arithmetic</div>
<div class="a" style="left:365.2px;top:1008.8px;font-size:18.5px;line-height:18.5px;color:#344050;font-weight:normal;letter-spacing:0.5px;">Mean <span class="pr">(</span>m³<span class="pr">)</span><span class="bdg">0.00%</span></div>
<div class="a" style="left:365.7px;top:1039.9px;font-size:45.8px;line-height:45.8px;color:#5e6e82;font-weight:normal;"><span style="letter-spacing:2.5px">0</span></div>
<div class="a" style="left:365.2px;top:1098.4px;font-size:15.5px;line-height:15.5px;color:#65707f;font-weight:normal;transform:scaleX(0.885);transform-origin:0 0;">Per Unit Area 0 (m³/M²)</div>
<div class="card" style="left:699.2px;top:960.5px"><svg class="bg" width="339" height="241" viewBox="0 0 339 241">
<path style="mix-blend-mode:multiply" fill="#e6fbfd" d="M189,0 C184,58 195,108 262,131 C298,146 322,168 339,198 L339,0 Z"/>
<path style="mix-blend-mode:multiply" fill="#f2fdf9" d="M297,0 C285,35 280,80 266,128 C256,160 240,180 232,195 C226,210 224,225 224,241 L339,241 L339,0 Z"/>
<path style="mix-blend-mode:multiply" fill="#eefaee" d="M119,241 C140,212 160,202 233,193 C272,185 305,168 339,145 L339,241 Z"/>
</svg></div>
<div class="a" style="left:725.2px;top:986.1px;font-size:18.5px;line-height:18.5px;color:#344050;font-weight:normal;letter-spacing:0.463px;">Reporting Period 中水 Median</div>
<div class="a" style="left:725.2px;top:1008.8px;font-size:18.5px;line-height:18.5px;color:#344050;font-weight:normal;letter-spacing:0.412px;"><span class="pr">(</span>Middle Value<span class="pr">)</span> <span class="pr">(</span>m³<span class="pr">)</span><span class="bdg">0.00%</span></div>
<div class="a" style="left:725.7px;top:1039.9px;font-size:45.8px;line-height:45.8px;color:#5e6e82;font-weight:normal;"><span style="letter-spacing:2.5px">0</span></div>
<div class="a" style="left:725.2px;top:1098.4px;font-size:15.5px;line-height:15.5px;color:#65707f;font-weight:normal;transform:scaleX(0.885);transform-origin:0 0;">Per Unit Area 0 (m³/M²)</div>
<div class="a" style="left:725.2px;top:1126.2px;font-size:15.5px;line-height:15.5px;color:#65707f;font-weight:normal;transform:scaleX(0.885);transform-origin:0 0;">Per Capita 0 (m³)</div>
<div class="card" style="left:1060.1px;top:960.5px"><svg class="bg" width="339" height="241" viewBox="0 0 339 241">
<path style="mix-blend-mode:multiply" fill="#e6fbfd" d="M189,0 C184,58 195,108 262,131 C298,146 322,168 339,198 L339,0 Z"/>
<path style="mix-blend-mode:multiply" fill="#f2fdf9" d="M297,0 C285,35 280,80 266,128 C256,160 240,180 232,195 C226,210 224,225 224,241 L339,241 L339,0 Z"/>
<path style="mix-blend-mode:multiply" fill="#eefaee" d="M119,241 C140,212 160,202 233,193 C272,185 305,168 339,145 L339,241 Z"/>
</svg></div>
<div class="a" style="left:1086.1px;top:986.1px;font-size:18.5px;line-height:18.5px;color:#344050;font-weight:normal;letter-spacing:0.471px;">Reporting Period 中水 Minimum</div>
<div class="a" style="left:1086.1px;top:1008.8px;font-size:18.5px;line-height:18.5px;color:#344050;font-weight:normal;letter-spacing:0.45px;">Value <span class="pr">(</span>m³<span class="pr">)</span><span class="bdg">0.00%</span></div>
<div class="a" style="left:1086.6px;top:1039.9px;font-size:45.8px;line-height:45.8px;color:#5e6e82;font-weight:normal;"><span style="letter-spacing:2.5px">0</span></div>
<div class="a" style="left:1086.1px;top:1098.4px;font-size:15.5px;line-height:15.5px;color:#65707f;font-weight:normal;transform:scaleX(0.885);transform-origin:0 0;">Per Unit Area 0 (m³/M²)</div>
<div class="a" style="left:1086.1px;top:1126.2px;font-size:15.5px;line-height:15.5px;color:#65707f;font-weight:normal;transform:scaleX(0.885);transform-origin:0 0;">Per Capita 0 (m³)</div>
<div class="card" style="left:1421px;top:960.5px"><svg class="bg" width="339" height="241" viewBox="0 0 339 241">
<path style="mix-blend-mode:multiply" fill="#e6fbfd" d="M189,0 C184,58 195,108 262,131 C298,146 322,168 339,198 L339,0 Z"/>
<path style="mix-blend-mode:multiply" fill="#f2fdf9" d="M297,0 C285,35 280,80 266,128 C256,160 240,180 232,195 C226,210 224,225 224,241 L339,241 L339,0 Z"/>
<path style="mix-blend-mode:multiply" fill="#eefaee" d="M119,241 C140,212 160,202 233,193 C272,185 305,168 339,145 L339,241 Z"/>
</svg></div>
<div class="a" style="left:1447.0px;top:986.1px;font-size:18.5px;line-height:18.5px;color:#344050;font-weight:normal;letter-spacing:0.48px;">Reporting Period 中水 Maximum</div>
<div class="a" style="left:1447.0px;top:1008.8px;font-size:18.5px;line-height:18.5px;color:#344050;font-weight:normal;letter-spacing:0.45px;">Value <span class="pr">(</span>m³<span class="pr">)</span><span class="bdg">0.00%</span></div>
<div class="a" style="left:1447.5px;top:1039.9px;font-size:45.8px;line-height:45.8px;color:#5e6e82;font-weight:normal;"><span style="letter-spacing:2.5px">0</span></div>
<div class="a" style="left:1447.0px;top:1098.4px;font-size:15.5px;line-height:15.5px;color:#65707f;font-weight:normal;transform:scaleX(0.885);transform-origin:0 0;">Per Unit Area 0 (m³/M²)</div>
<div class="a" style="left:1447.0px;top:1126.2px;font-size:15.5px;line-height:15.5px;color:#65707f;font-weight:normal;transform:scaleX(0.885);transform-origin:0 0;">Per Capita 0 (m³)</div>
<div class="card" style="left:1781.8px;top:960.5px"><svg class="bg" width="339" height="241" viewBox="0 0 339 241">
<path style="mix-blend-mode:multiply" fill="#e6fbfd" d="M189,0 C184,58 195,108 262,131 C298,146 322,168 339,198 L339,0 Z"/>
<path style="mix-blend-mode:multiply" fill="#f2fdf9" d="M297,0 C285,35 280,80 266,128 C256,160 240,180 232,195 C226,210 224,225 224,241 L339,241 L339,0 Z"/>
<path style="mix-blend-mode:multiply" fill="#eefaee" d="M119,241 C140,212 160,202 233,193 C272,185 305,168 339,145 L339,241 Z"/>
</svg></div>
<div class="a" style="left:1807.8px;top:986.1px;font-size:18.5px;line-height:18.5px;color:#344050;font-weight:normal;letter-spacing:0.467px;">Reporting Period 中水 Sample</div>
<div class="a" style="left:1807.8px;top:1008.4px;font-size:18.5px;line-height:18.5px;color:#344050;font-weight:normal;letter-spacing:0.419px;">Standard Deviation <span class="pr">(</span>m³<span class="pr">)</span></div>
<div class="a" style="left:1809.5px;top:1030.8px;font-size:18.5px;line-height:18.5px;color:#344050;font-weight:normal;"><span class="bdg">0.00%</span></div>
<div class="a" style="left:1808.3px;top:1060.9px;font-size:45.8px;line-height:45.8px;color:#5e6e82;font-weight:normal;"><span style="letter-spacing:2.5px">0</span></div>
<div class="a" style="left:1807.8px;top:1119.4px;font-size:15.5px;line-height:15.5px;color:#65707f;font-weight:normal;transform:scaleX(0.885);transform-origin:0 0;">Per Unit Area 0 (m³/M²)</div>
<div class="a" style="left:1807.8px;top:1147.2px;font-size:15.5px;line-height:15.5px;color:#65707f;font-weight:normal;transform:scaleX(0.885);transform-origin:0 0;">Per Capita 0 (m³)</div>
<div class="card" style="left:2142.8px;top:960.5px"><svg class="bg" width="339" height="241" viewBox="0 0 339 241">
<path style="mix-blend-mode:multiply" fill="#e6fbfd" d="M189,0 C184,58 195,108 262,131 C298,146 322,168 339,198 L339,0 Z"/>
<path style="mix-blend-mode:multiply" fill="#f2fdf9" d="M297,0 C285,35 280,80 266,128 C256,160 240,180 232,195 C226,210 224,225 224,241 L339,241 L339,0 Z"/>
<path style="mix-blend-mode:multiply" fill="#eefaee" d="M119,241 C140,212 160,202 233,193 C272,185 305,168 339,145 L339,241 Z"/>
</svg></div>
<div class="a" style="left:2168.8px;top:986.1px;font-size:18.5px;line-height:18.5px;color:#344050;font-weight:normal;letter-spacing:0.467px;">Reporting Period 中水 Sample</div>
<div class="a" style="left:2168.8px;top:1008.8px;font-size:18.5px;line-height:18.5px;color:#344050;font-weight:normal;letter-spacing:0.438px;">Variance <span class="pr">(</span>m³<span class="pr">)</span><span class="bdg">0.00%</span></div>
<div class="a" style="left:2169.3px;top:1039.9px;font-size:45.8px;line-height:45.8px;color:#5e6e82;font-weight:normal;"><span style="letter-spacing:2.5px">0</span></div>
<div class="a" style="left:2168.8px;top:1098.4px;font-size:15.5px;line-height:15.5px;color:#65707f;font-weight:normal;transform:scaleX(0.885);transform-origin:0 0;">Per Unit Area 0 (m³/M²)</div>
<div class="a" style="left:2168.8px;top:1126.2px;font-size:15.5px;line-height:15.5px;color:#65707f;font-weight:normal;transform:scaleX(0.885);transform-origin:0 0;">Per Capita 0 (m³)</div>
<div class="card" style="left:339px;top:1222.5px;width:2143px;height:60px"></div>
</body></html>
